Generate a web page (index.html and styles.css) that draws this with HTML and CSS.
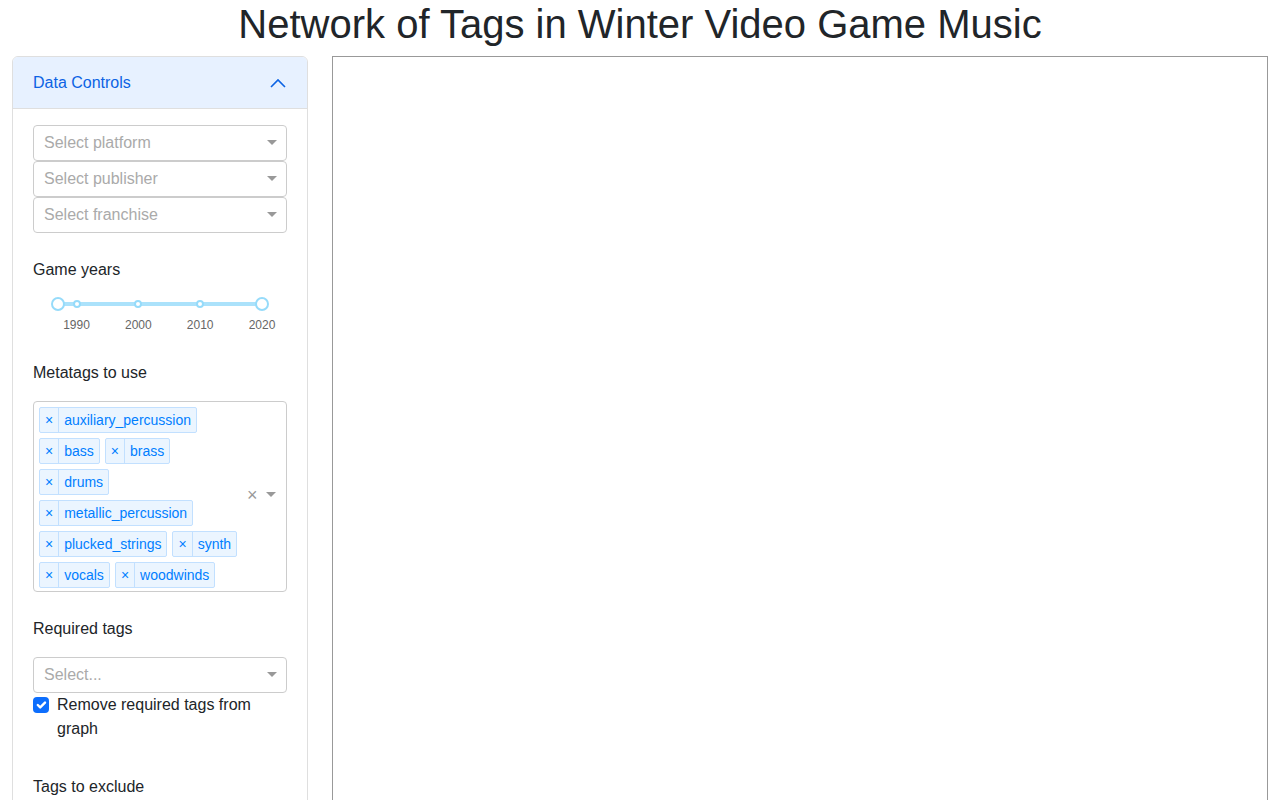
FILE: index.html
```html
<!DOCTYPE html>
<html lang="en">
<head>
  <meta charset="UTF-8">
  <title>Network of Tags in Winter Video Game Music</title>
  <link rel="stylesheet" href="styles.css">
</head>
<body>
  <h1 class="title">Network of Tags in Winter Video Game Music</h1>

  <div class="layout">
    <div class="card">
      <div class="card-header">
        <span>Data Controls</span>
        <svg class="chevron" width="16" height="10" viewBox="0 0 16 10">
          <path d="M1 9 L8 2 L15 9" fill="none" stroke="#0c63e4" stroke-width="1.6"/>
        </svg>
      </div>

      <div class="card-body">
        <div class="select"><span class="placeholder">Select platform</span><span class="arrow"></span></div>
        <div class="select"><span class="placeholder">Select publisher</span><span class="arrow"></span></div>
        <div class="select"><span class="placeholder">Select franchise</span><span class="arrow"></span></div>

        <div class="label label-first">Game years</div>
        <div class="slider-wrap">
          <div class="slider">
            <div class="rail"></div>
            <!-- 1987 .. 2020 -->
            <span class="dot" style="left: 9.09%"></span>
            <span class="dot" style="left: 39.39%"></span>
            <span class="dot" style="left: 69.70%"></span>
            <span class="dot" style="left: 100%"></span>
            <span class="handle" style="left: 0%"></span>
            <span class="handle" style="left: 100%"></span>
            <span class="mark" style="left: 9.09%">1990</span>
            <span class="mark" style="left: 39.39%">2000</span>
            <span class="mark" style="left: 69.70%">2010</span>
            <span class="mark" style="left: 100%">2020</span>
          </div>
        </div>

        <div class="label label-slider">Metatags to use</div>
        <div class="multi">
          <div class="values">
            <span class="chip"><span class="chip-x">×</span><span class="chip-label">auxiliary_percussion</span></span>
            <span class="chip"><span class="chip-x">×</span><span class="chip-label">bass</span></span>
            <span class="chip"><span class="chip-x">×</span><span class="chip-label">brass</span></span>
            <span class="chip"><span class="chip-x">×</span><span class="chip-label">drums</span></span>
            <span class="chip"><span class="chip-x">×</span><span class="chip-label">metallic_percussion</span></span>
            <span class="chip"><span class="chip-x">×</span><span class="chip-label">plucked_strings</span></span>
            <span class="chip"><span class="chip-x">×</span><span class="chip-label">synth</span></span>
            <span class="chip"><span class="chip-x">×</span><span class="chip-label">vocals</span></span>
            <span class="chip"><span class="chip-x">×</span><span class="chip-label">woodwinds</span></span>
          </div>
          <span class="clear">×</span>
          <span class="arrow"></span>
        </div>

        <div class="label label-multi">Required tags</div>
        <div class="select"><span class="placeholder">Select...</span><span class="arrow"></span></div>
        <label class="check">
          <span class="box">
            <svg width="16" height="16" viewBox="0 0 20 20"><path d="M6 10l3 3l6-6" fill="none" stroke="#fff" stroke-width="3" stroke-linecap="round" stroke-linejoin="round"/></svg>
          </span>
          <span>Remove required tags from graph</span>
        </label>

        <div class="label label-check">Tags to exclude</div>
      </div>
    </div>

    <div class="graph"></div>
  </div>
</body>
</html>
```

FILE: styles.css
```css
body { margin: 0; font-family: "Liberation Sans", Arial, sans-serif; font-size: 16px; line-height: 1.5; color: #212529; background: #fff; }
.title { margin: 0 0 8px; font-size: 40px; font-weight: 400; line-height: 48px; text-align: center; }

.layout { display: grid; grid-template-columns: 296px 1fr; gap: 24px; padding: 0 12px; align-items: start; }

.card { border: 1px solid #dfdfdf; border-radius: 6px; overflow: hidden; height: 820px; }
.card-header { display: flex; justify-content: space-between; align-items: center; height: 51px; padding: 0 20px; background: #e7f1ff; color: #0c63e4; border-bottom: 1px solid #dfdfdf; }
.chevron { margin-right: 1px; }
.card-body { padding: 16px 20px; display: flex; flex-direction: column; }

.select { display: flex; align-items: center; height: 36px; box-sizing: border-box; border: 1px solid #ccc; border-radius: 4px; padding: 0 9px 0 10px; background: #fff; }
.placeholder { flex: 1; color: #aaa; }
.arrow { width: 0; height: 0; border-style: solid; border-width: 5px 5px 2.5px; border-color: #999 transparent transparent; }

.label { height: 24px; }
.label-first { margin-top: 25px; }
.label-slider { margin-top: 15px; }
.label-multi { margin-top: 25px; margin-bottom: 16px; }
.label-check { margin-top: 34px; }

.slider-wrap { margin-top: 15px; padding: 0 25px 25px; }
.slider { position: relative; height: 24px; }
.rail { position: absolute; left: 0; right: 0; top: 5px; height: 4px; border-radius: 6px; background: #abe2fb; }
.dot { position: absolute; top: 3px; width: 8px; height: 8px; margin-left: -4px; box-sizing: border-box; border: 2px solid #96dbfa; border-radius: 50%; background: #fff; }
.handle { position: absolute; top: 0; width: 14px; height: 14px; margin-left: -7px; box-sizing: border-box; border: 2px solid #96dbfa; border-radius: 50%; background: #fff; }
.mark { position: absolute; top: 20px; transform: translateX(-50%); font-size: 12px; line-height: 17px; color: #666; }

.multi { margin-top: 16px; display: flex; align-items: center; border: 1px solid #ccc; border-radius: 4px; padding: 0 9px 3px 0; }
.values { flex: 1; display: flex; flex-wrap: wrap; align-content: flex-start; max-width: 210px; }
.chip { display: flex; margin: 5px 0 0 5px; border: 1px solid #c2e0ff; border-radius: 2px; background: #ebf5ff; color: #007eff; font-size: 14px; line-height: 20px; }
.chip-x { padding: 2px 5px; border-right: 1px solid #c2e0ff; }
.chip-label { padding: 2px 5px 2px 5px; }
.clear { color: #999; font-size: 18px; line-height: 1; margin: 0 8px 0 3px; }

.check { display: flex; align-items: flex-start; gap: 8px; }
.box { flex: none; width: 16px; height: 16px; margin-top: 4px; border-radius: 4px; background: #0d6efd; }
.box svg { display: block; }

.graph { border: 1px solid #999; height: 800px; }
```
